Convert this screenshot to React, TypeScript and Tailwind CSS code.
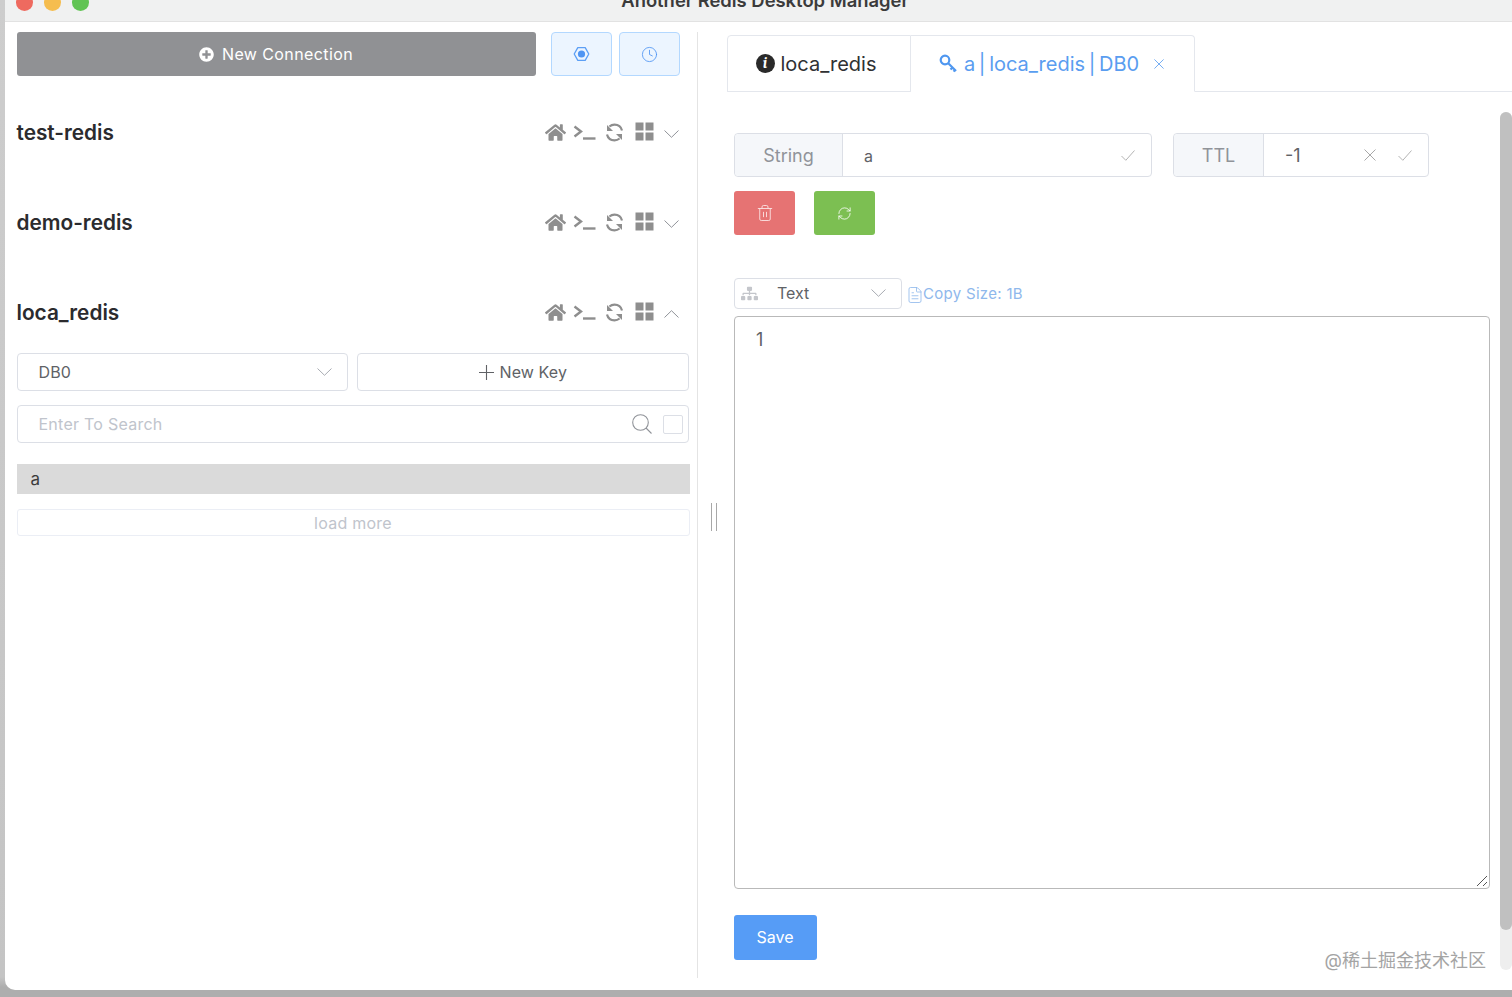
import { Clock, FileText, RefreshCw, Trash2 } from "lucide-react";
import { FaHome, FaPlusCircle, FaSitemap } from "react-icons/fa";

function Refresh() {
  return (
    <svg width="19" height="19" viewBox="0 0 19 19" fill="none" stroke="#8e8e8e" strokeWidth="2.2">
      <path d="M17 7.5A7.8 7.8 0 0 0 9.5 1.6 7.8 7.8 0 0 0 4.4 3.5" />
      <path d="M2 11.5A7.8 7.8 0 0 0 9.5 17.4 7.8 7.8 0 0 0 14.6 15.5" />
      <path d="M2 2V8H8Z" fill="#8e8e8e" stroke="none" />
      <path d="M17 17V11H11Z" fill="#8e8e8e" stroke="none" />
    </svg>
  );
}

function Terminal() {
  return (
    <svg width="23" height="18" viewBox="0 0 23 18" fill="none" stroke="#8e8e8e" strokeWidth="2.4">
      <path d="M1.5 3.5 8 8.5 1.5 13.5" />
      <path d="M10 15.5h12.5" />
    </svg>
  );
}

function Grid() {
  return (
    <svg width="19" height="19" viewBox="0 0 19 19" fill="#8e8e8e">
      <rect x="0.5" y="0.5" width="8" height="8" />
      <rect x="10.5" y="0.5" width="8" height="8" />
      <rect x="0.5" y="10.5" width="8" height="8" />
      <rect x="10.5" y="10.5" width="8" height="8" />
    </svg>
  );
}

function Chevron({ up, color = "#a8abb2" }: { up?: boolean; color?: string }) {
  return (
    <svg width="15" height="8" viewBox="0 0 15 8" fill="none" stroke={color} strokeWidth="1">
      <path d={up ? "M0.5 7.5 7.5 0.7 14.5 7.5" : "M0.5 0.5 7.5 7.3 14.5 0.5"} />
    </svg>
  );
}

function Tick() {
  return (
    <svg width="14" height="11" viewBox="0 0 14 11" fill="none" stroke="#b4b4b4" strokeWidth="1">
      <path d="M0.5 6 4.8 10.3 13.5 0.5" />
    </svg>
  );
}

function Cross({ size = 12, color = "#a8a8a8" }: { size?: number; color?: string }) {
  return (
    <svg width={size} height={size} viewBox="0 0 12 12" fill="none" stroke={color} strokeWidth="1">
      <path d="M0.5 0.5 11.5 11.5M11.5 0.5 0.5 11.5" />
    </svg>
  );
}

function PlusMark() {
  return (
    <svg width="15" height="15" viewBox="0 0 15 15" fill="none" stroke="#606266" strokeWidth="1.1">
      <path d="M7.5 0V15M0 7.5H15" />
    </svg>
  );
}

function Magnifier() {
  return (
    <svg width="20" height="20" viewBox="0 0 20 20" fill="none" stroke="#909399" strokeWidth="1.1">
      <circle cx="8.5" cy="8.5" r="7.8" />
      <path d="M14 14 19.5 19.5" />
    </svg>
  );
}

function ConnectionRow({ name, open, className }: { name: string; open?: boolean; className: string }) {
  return (
    <div className={`flex h-[30px] items-center justify-between pr-[10px] ${className}`}>
      <span className="text-[20.8px] font-semibold text-[#2b2b2e]">{name}</span>
      <div className="flex items-center pb-[2px]">
        <FaHome size={21} color="#8e8e8e" />
        <div className="ml-[7px]">
          <Terminal />
        </div>
        <div className="ml-[9px]">
          <Refresh />
        </div>
        <div className="ml-[11px] -mt-[1px]">
          <Grid />
        </div>
        <div className="ml-[10px] mt-[3px] flex h-[19px] items-center">
          <Chevron up={open} color="#909399" />
        </div>
      </div>
    </div>
  );
}

function GearIcon() {
  return (
    <svg width="17" height="16" viewBox="0 0 17 16" fill="none">
      <path d="M1.2 8 4.8 1.6H12.2L15.8 8 12.2 14.4H4.8Z" stroke="#5c9ff5" strokeWidth="1.3" strokeLinejoin="round" />
      <circle cx="8.5" cy="8" r="3.6" fill="#4f95f3" />
    </svg>
  );
}

function KeyIcon() {
  return (
    <svg width="19" height="19" viewBox="0 0 19 19" fill="none" stroke="#4f97f0" strokeWidth="2.2">
      <circle cx="6" cy="6" r="4.3" />
      <path d="M9 9 17 17M13.5 13.5 11.5 15.5M16 16 14.5 17.5" />
    </svg>
  );
}

export default function App() {
  return (
    <div
      className="h-[997px] w-[1512px] overflow-hidden bg-[linear-gradient(to_bottom,#cdcdcd_0%,#c4c4c4_98%,#aeaeae_99%)] pb-[7px] pl-[5px]"
      style={{ fontFamily: "Inter, 'Noto Sans CJK SC', sans-serif" }}
    >
      <div className="relative flex h-full flex-col overflow-hidden rounded-bl-[10px] bg-white">
        {/* title bar */}
        <div className="relative flex h-[22px] shrink-0 items-end justify-center overflow-hidden border-b border-[#e2e2e2] bg-[#f0f1f1]">
          <div className="absolute left-[11px] top-[-6px] flex gap-[11px]">
            <span className="h-[17px] w-[17px] rounded-full bg-[#ee6a5f]" />
            <span className="h-[17px] w-[17px] rounded-full bg-[#f5bd4f]" />
            <span className="h-[17px] w-[17px] rounded-full bg-[#61c454]" />
          </div>
          <span className="mb-[11px] ml-[13px] whitespace-nowrap text-[18.4px] font-semibold leading-[20px] text-[#3b3b3b]">
            Another Redis Desktop Manager
          </span>
        </div>

        <div className="flex min-h-0 flex-1">
          {/* left aside */}
          <div className="w-[693px] shrink-0 pb-[12px] pl-[11.5px] pt-[10px]">
            <div className="flex h-full flex-col border-r border-[#e4e4e4] pr-[8.5px]">
              <div className="flex h-[44px] shrink-0">
                <button className="flex h-[44px] w-[519px] items-center justify-center gap-[8px] rounded-[3px] bg-[#909194] text-[16px] tracking-[0.4px] text-white">
                  <FaPlusCircle size={15} />
                  New Connection
                </button>
                <button className="ml-[15px] flex h-[44px] w-[61px] items-center justify-center rounded-[4px] border border-[#b3d8ff] bg-[#ecf5ff]">
                  <GearIcon />
                </button>
                <button className="ml-[7px] flex h-[44px] w-[61px] items-center justify-center rounded-[4px] border border-[#b3d8ff] bg-[#ecf5ff]">
                  <Clock size={17} strokeWidth={1.2} color="#4f95f3" />
                </button>
              </div>

              <ConnectionRow name="test-redis" className="mt-[42px]" />
              <ConnectionRow name="demo-redis" className="mt-[60px]" />
              <ConnectionRow name="loca_redis" open className="mt-[60px]" />

              <div className="mt-[25px] flex gap-[9px]">
                <div className="flex h-[38px] w-[332px] items-center justify-between rounded-[4px] border border-[#dcdfe6] pl-[21px] pr-[15px] text-[16px] tracking-[0.1px] text-[#606266]">
                  DB0
                  <Chevron />
                </div>
                <div className="flex h-[38px] w-[332px] items-center justify-center gap-[6px] rounded-[4px] border border-[#dcdfe6] text-[16px] tracking-[0.1px] text-[#606266]">
                  <PlusMark />
                  New Key
                </div>
              </div>

              <div className="mt-[14px] flex h-[38px] w-[672.5px] items-center justify-between rounded-[4px] border border-[#dcdfe6] pl-[21px] pr-[5px] text-[16px] tracking-[0.25px] text-[#c0c4cc]">
                Enter To Search
                <div className="flex items-center gap-[11px]">
                  <Magnifier />
                  <span className="h-[19px] w-[20px] rounded-[2px] border border-[#dcdfe6]" />
                </div>
              </div>

              <div className="mt-[21px] flex h-[30px] w-[673px] items-center bg-[#dadada] pl-[14px] pt-[1px] text-[17px] text-[#3c3c3c]">
                a
              </div>
              <div className="mt-[15px] flex h-[27px] w-[673px] items-center justify-center rounded-[3px] border border-[#ebeef5] text-[16px] tracking-[0.25px] text-[#c0c4cc]">
                load more
              </div>
            </div>
          </div>

          {/* drag handle */}
          <div className="flex w-[29px] shrink-0 items-center justify-center pb-[2px] pl-[2px] pt-[24px]">
            <div className="h-[28px] w-[6px] border-x border-[#a8a8a8]" />
          </div>

          {/* right pane */}
          <div className="relative min-w-0 flex-1">
            <div className="mt-[13px] flex h-[57px] border-b border-[#e4e7ed]">
              <div className="flex h-[57px] w-[184px] items-center justify-center gap-[6px] rounded-tl-[4px] border border-[#e4e7ed] bg-white pr-[6px] text-[20px] text-[#303133]">
                <span className="flex h-[19px] w-[19px] items-center justify-center rounded-full bg-[#2a2a2a] font-serif text-[15px] font-bold italic text-white">
                  i
                </span>
                loca_redis
              </div>
              <div className="flex h-[57px] w-[284px] items-center rounded-tr-[4px] border border-l-0 border-[#e4e7ed] border-b-white bg-white pl-[28px] text-[20px] text-[#5a9df0] [word-spacing:-2px]">
                <KeyIcon />
                <span className="ml-[6px]">a | loca_redis | DB0</span>
                <span className="ml-[15px]">
                  <Cross size={10} color="#5a9df0" />
                </span>
              </div>
            </div>

            <div className="ml-[7px] mt-[41px] flex">
              <div className="flex h-[44px] w-[418px] rounded-[4px] border border-[#dcdfe6] text-[18px]">
                <div className="flex w-[108px] items-center justify-center rounded-l-[4px] border-r border-[#dcdfe6] bg-[#f5f7fa] text-[#909399]">
                  String
                </div>
                <div className="flex flex-1 items-center justify-between pl-[21px] pr-[16px] text-[16px] text-[#606266]">
                  <span className="pt-[1px]">a</span>
                  <Tick />
                </div>
              </div>
              <div className="ml-[21px] flex h-[44px] w-[256px] rounded-[4px] border border-[#dcdfe6] text-[18px]">
                <div className="flex w-[90px] items-center justify-center rounded-l-[4px] border-r border-[#dcdfe6] bg-[#f5f7fa] text-[#909399]">
                  TTL
                </div>
                <div className="flex flex-1 items-center pl-[21px] pr-[16px] text-[#606266]">
                  -1
                  <span className="ml-auto">
                    <Cross />
                  </span>
                  <span className="ml-[22px]">
                    <Tick />
                  </span>
                </div>
              </div>
            </div>

            <div className="ml-[7px] mt-[14px] flex gap-[19px]">
              <button className="flex h-[44px] w-[61px] items-center justify-center rounded-[3px] bg-[#e67373]">
                <Trash2 size={18} strokeWidth={1.2} color="#fbe3e3" />
              </button>
              <button className="flex h-[44px] w-[61px] items-center justify-center rounded-[3px] bg-[#7cbf52]">
                <RefreshCw size={15} strokeWidth={1.3} color="#ffffff" />
              </button>
            </div>

            <div className="ml-[7px] mt-[43px] flex items-center">
              <div className="flex h-[31px] w-[168px] items-center justify-between rounded-[4px] border border-[#dcdfe6] pb-[1px] pl-[6px] pr-[15px] text-[16px] text-[#606266]">
                <div className="flex items-center gap-[19px]">
                  <FaSitemap size={17} color="#c4c6cb" />
                  Text
                </div>
                <Chevron />
              </div>
              <div className="ml-[4px] mt-[2px] flex items-center text-[15px] tracking-[0.3px] text-[#8fb8ec]">
                <FileText size={18} strokeWidth={1.1} className="-mr-[1px]" />
                Copy Size: 1B
              </div>
            </div>

            <div className="relative ml-[7px] mt-[7px] h-[573px] w-[756px] rounded-[4px] border border-[#b9b9b9] pl-[21px] pt-[9px] text-[18px] text-[#606266]">
              1
              <svg className="absolute bottom-[1px] right-[1px]" width="12" height="12" viewBox="0 0 12 12" stroke="#555" strokeWidth="1" fill="none">
                <path d="M1 11 11 1M7 11l4-4" />
              </svg>
            </div>

            <button className="ml-[7px] mt-[26px] flex h-[45px] w-[83px] items-center justify-center rounded-[3px] bg-[#569cf6] pb-[2px] pr-[1px] text-[16px] text-white">
              Save
            </button>

            {/* scrollbar */}
            <div className="absolute bottom-[20px] right-0 top-[90px] w-[12px] rounded-[6px] bg-[#eeeeee]">
              <div className="h-[818px] w-full rounded-[6px] bg-[#c0c0c0]" />
            </div>

            {/* watermark */}
            <span className="absolute bottom-[16px] right-[26px] text-[18px] text-[#a4a4a4]">@稀土掘金技术社区</span>
          </div>
        </div>
      </div>
    </div>
  );
}
